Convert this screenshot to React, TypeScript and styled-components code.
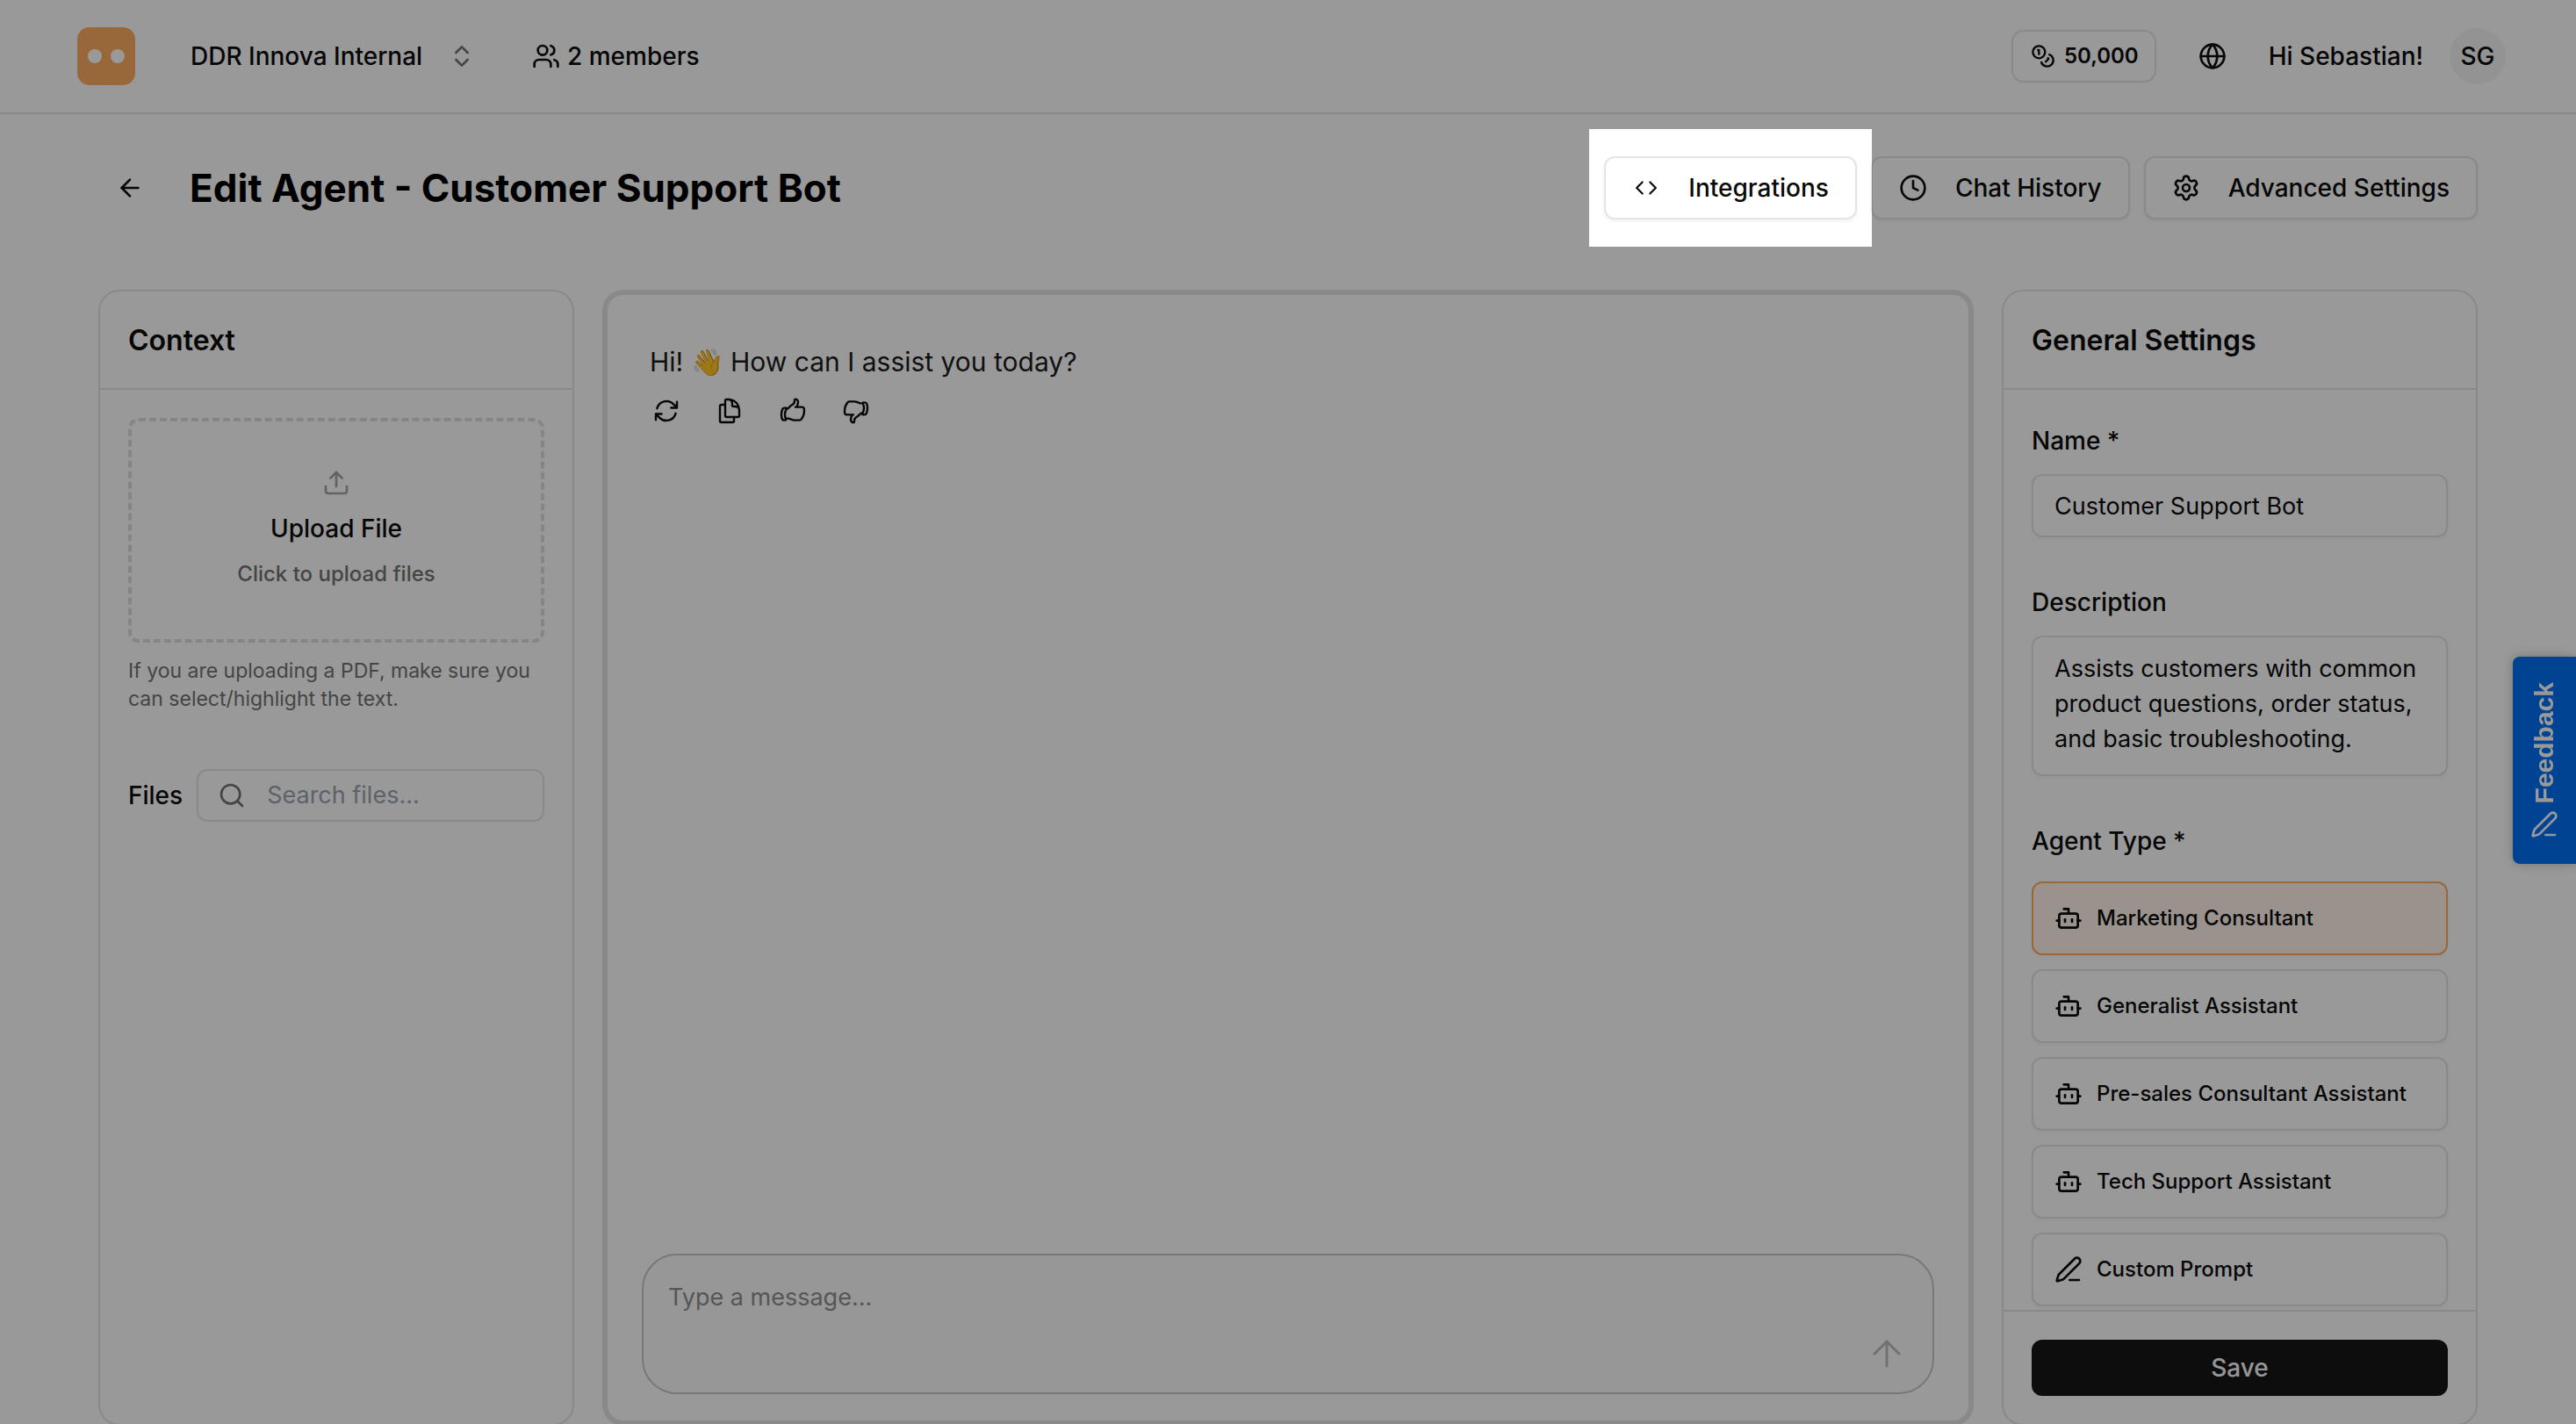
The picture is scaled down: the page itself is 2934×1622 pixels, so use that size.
import React, { useState } from "react";
import styled, { createGlobalStyle } from "styled-components";
import {
  ArrowLeft,
  ArrowUp,
  Bot,
  ChevronsUpDown,
  Clock,
  Code,
  Coins,
  Globe,
  PenLine,
  Search,
  Settings,
  Upload,
  Users,
} from "lucide-react";
import {
  HiOutlineArrowPath,
  HiOutlineDocumentDuplicate,
  HiOutlineHandThumbDown,
  HiOutlineHandThumbUp,
} from "react-icons/hi2";

const color = {
  text: "#0a0a0a",
  muted: "#737373",
  placeholder: "#9ca3af",
  border: "#e5e5e5",
  accent: "#ffad61",
  accentSoft: "#fff3eb",
  primary: "#171717",
  feedback: "#0071f5",
};

const GlobalStyle = createGlobalStyle`
  *, *::before, *::after { box-sizing: border-box; }
  html, body { margin: 0; background: #fff; }
  body, button, input, textarea, select {
    font-family: Inter, "Noto Sans", sans-serif;
    font-size: 28px;
    line-height: 40px;
    color: ${color.text};
  }
  input, textarea { font-size: 27px; }
  h1, h2, p { margin: 0; }
  button { cursor: pointer; }
  svg { flex: none; display: block; }
`;

const Page = styled.div`
  display: flex;
  flex-direction: column;
  height: 100vh;
  overflow: hidden;
`;

const TopBar = styled.header`
  display: flex;
  align-items: center;
  justify-content: space-between;
  height: 130px;
  flex: none;
  padding: 0 80px 0 88px;
  border-bottom: 2px solid ${color.border};
`;

const TopGroup = styled.div`
  display: flex;
  align-items: center;
`;

const Logo = styled.a`
  display: flex;
  margin-right: 63px;
`;

const Workspace = styled.label`
  display: flex;
  align-items: center;
  gap: 28px;
  color: ${color.muted};
  margin-right: 64px;
`;

const WorkspaceSelect = styled.select`
  appearance: none;
  border: 0;
  padding: 0;
  background: none;
  font-weight: 500;
`;

const PlainButton = styled.button`
  display: flex;
  align-items: center;
  gap: 8px;
  border: 0;
  padding: 0;
  background: none;
  font-weight: 500;
`;

const Credits = styled.button`
  display: flex;
  align-items: center;
  gap: 10px;
  height: 60px;
  padding: 0 18px 0 20px;
  border: 2px solid ${color.border};
  border-radius: 14px;
  background: #fff;
  font-size: 24px;
  font-weight: 600;
  margin-right: 48px;
`;

const Greeting = styled.span`
  font-weight: 500;
  margin: 0 30px 0 48px;
`;

const Avatar = styled.button`
  width: 64px;
  height: 64px;
  border: 0;
  border-radius: 50%;
  padding: 0;
  background: #f5f5f5;
  font-weight: 500;
`;

const Main = styled.main`
  display: flex;
  flex-direction: column;
  flex: 1;
  min-height: 0;
  padding: 48px 112px 0;
`;

const TitleRow = styled.div`
  display: flex;
  align-items: center;
  justify-content: space-between;
  height: 72px;
  flex: none;
  margin-bottom: 80px;
`;

const TitleGroup = styled.div`
  display: flex;
  align-items: center;
  gap: 52px;
  padding-left: 20px;
`;

const Title = styled.h1`
  font-size: 44px;
  line-height: 64px;
  font-weight: 700;
  color: #000;
`;

const Actions = styled.div`
  display: flex;
  gap: 16px;
`;

const ActionButton = styled.button`
  display: flex;
  align-items: center;
  gap: 32px;
  height: 72px;
  padding: 0 30px;
  border: 2px solid ${color.border};
  border-radius: 12px;
  background: #fff;
  box-shadow: 0 2px 4px rgba(0, 0, 0, 0.06);
  font-weight: 500;
`;

const IconSlot = styled.span`
  display: grid;
  place-items: center;
  width: 32px;
`;

/* Tour step: dims everything on the page except the wrapped control. */
const Spotlight = styled.div`
  position: relative;
  z-index: 10;

  &::after {
    content: "";
    position: absolute;
    inset: -31px -17px;
    box-shadow: 0 0 0 9999px rgba(0, 0, 0, 0.4);
    pointer-events: none;
  }
`;

const Columns = styled.div`
  display: grid;
  grid-template-columns: 20% minmax(0, 1fr) 20%;
  gap: 32px;
  flex: 1;
  min-height: 0;
  margin-bottom: -2px;
`;

const Card = styled.section<{ $ring?: boolean }>`
  display: flex;
  flex-direction: column;
  min-height: 0;
  overflow: hidden;
  border: ${(p) => (p.$ring ? 6 : 2)}px solid ${color.border};
  border-radius: 24px;
  background: #fff;
`;

const CardHeader = styled.header`
  flex: none;
  padding: 36px 32px 34px;
  border-bottom: 2px solid ${color.border};
`;

const CardTitle = styled.h2`
  font-size: 32px;
  line-height: 40px;
  font-weight: 600;
`;

const ContextBody = styled.div`
  display: flex;
  flex-direction: column;
  padding: 32px;
`;

const DropZone = styled.button`
  display: flex;
  flex-direction: column;
  align-items: center;
  justify-content: center;
  gap: 12px;
  height: 256px;
  border: 4px dashed #dedede;
  border-radius: 12px;
  background: #fff;
  font-weight: 500;

  svg {
    margin-bottom: 4px;
  }
`;

const DropHint = styled.span`
  font-size: 24px;
  color: ${color.muted};
`;

const Note = styled.p`
  margin-top: 16px;
  font-size: 23px;
  line-height: 32px;
  color: ${color.muted};
`;

const FilesRow = styled.div`
  display: flex;
  align-items: center;
  gap: 16px;
  margin-top: 64px;
`;

const FieldLabel = styled.label`
  font-weight: 500;
  line-height: 28px;
`;

const SearchBox = styled.div`
  display: flex;
  align-items: center;
  gap: 24px;
  flex: 1;
  min-width: 0;
  height: 60px;
  padding: 0 22px;
  border: 2px solid ${color.border};
  border-radius: 12px;
  color: ${color.muted};
`;

const SearchInput = styled.input`
  flex: 1;
  min-width: 0;
  border: 0;
  outline: 0;
  padding: 0;
  background: none;

  &::placeholder {
    color: ${color.placeholder};
  }
`;

const ChatBody = styled.div`
  flex: 1;
  padding: 52px 48px;
`;

const Message = styled.p`
  font-size: 30px;
  line-height: 48px;
  color: #1c1c1c;
`;

const MessageActions = styled.div`
  display: flex;
  gap: 40px;
  margin-top: 16px;
  padding-left: 3px;
`;

const IconButton = styled.button`
  display: flex;
  border: 0;
  padding: 0;
  background: none;
  font-size: 32px;
  line-height: 32px;

  svg {
    stroke-width: 1.8;
  }
`;

const Composer = styled.form`
  display: flex;
  height: 160px;
  flex: none;
  margin: 0 39px 30px;
  padding: 28px 28px 20px;
  border: 2px solid #c8c8c8;
  border-radius: 40px;
  background: #fcfcfc;
`;

const ComposerInput = styled.textarea`
  flex: 1;
  border: 0;
  outline: 0;
  padding: 0;
  resize: none;
  background: none;

  &::placeholder {
    color: #8f8f8f;
  }
`;

const SendButton = styled.button`
  align-self: flex-end;
  border: 0;
  padding: 0;
  background: none;
  color: #bdbdbd;
`;

const SettingsBody = styled.div`
  display: flex;
  flex-direction: column;
  gap: 60px;
  flex: 1;
  min-height: 0;
  overflow: hidden;
  padding: 44px 32px 0;
`;

const Field = styled.div`
  display: flex;
  flex-direction: column;
  gap: 24px;
`;

const TextInput = styled.input`
  height: 72px;
  padding: 0 24px;
  border: 2px solid ${color.border};
  border-radius: 12px;
  background: #fff;
  box-shadow: 0 2px 4px rgba(0, 0, 0, 0.04);
`;

const TextArea = styled.textarea`
  height: 160px;
  padding: 16px 24px;
  border: 2px solid ${color.border};
  border-radius: 12px;
  background: #fff;
  box-shadow: 0 2px 4px rgba(0, 0, 0, 0.04);
  resize: none;
  overflow: hidden;
`;

const TypeGroup = styled.fieldset`
  display: flex;
  flex-direction: column;
  gap: 16px;
  min-width: 0;
  margin: 0;
  padding: 0;
  border: 0;
`;

const TypeLegend = styled.legend`
  padding: 0;
  margin-bottom: 32px;
  font-weight: 500;
  line-height: 28px;
`;

const TypeOption = styled.label`
  display: flex;
  align-items: center;
  gap: 16px;
  height: 84px;
  padding: 0 24px;
  border: 2px solid ${color.border};
  border-radius: 12px;
  background: #fff;
  box-shadow: 0 2px 4px rgba(0, 0, 0, 0.04);
  font-size: 24px;
  font-weight: 500;
  white-space: nowrap;
  cursor: pointer;

  &:has(input:checked) {
    border-color: ${color.accent};
    background: ${color.accentSoft};
  }
`;

const HiddenRadio = styled.input`
  position: absolute;
  opacity: 0;
  pointer-events: none;
`;

const CardFooter = styled.footer`
  display: flex;
  flex: none;
  padding: 32px;
  border-top: 2px solid ${color.border};
`;

const SaveButton = styled.button`
  flex: 1;
  height: 64px;
  border: 0;
  border-radius: 12px;
  background: ${color.primary};
  color: #fafafa;
  font-weight: 500;
`;

const FeedbackTab = styled.button`
  position: fixed;
  right: 0;
  top: calc(50% - 63px);
  z-index: 5;
  display: flex;
  flex-direction: column;
  align-items: center;
  justify-content: center;
  gap: 8px;
  width: 72px;
  height: 236px;
  padding: 0;
  border: 0;
  border-radius: 8px 0 0 8px;
  background: ${color.feedback};
  color: #fff;
  box-shadow: 0 0 12px rgba(0, 0, 0, 0.25);
`;

const FeedbackText = styled.span`
  writing-mode: vertical-rl;
  transform: rotate(180deg);
  font-family: "Liberation Sans", Arial, sans-serif;
  font-size: 30px;
  line-height: 40px;
  font-weight: 700;
`;

const agentTypes = [
  { name: "Marketing Consultant", Icon: Bot },
  { name: "Generalist Assistant", Icon: Bot },
  { name: "Pre-sales Consultant Assistant", Icon: Bot },
  { name: "Tech Support Assistant", Icon: Bot },
  { name: "Custom Prompt", Icon: PenLine },
];

const messageActions = [
  { label: "Regenerate", Icon: HiOutlineArrowPath },
  { label: "Copy", Icon: HiOutlineDocumentDuplicate },
  { label: "Good response", Icon: HiOutlineHandThumbUp },
  { label: "Bad response", Icon: HiOutlineHandThumbDown },
];

function Header() {
  return (
    <TopBar>
      <TopGroup>
        <Logo href="#" aria-label="Home">
          <svg width="66" height="66" viewBox="0 0 66 66">
            <rect width="66" height="66" rx="14" fill={color.accent} />
            <circle cx="20" cy="33" r="8" fill="#fff" />
            <circle cx="46" cy="33" r="8" fill="#fff" />
          </svg>
        </Logo>
        <Workspace>
          <WorkspaceSelect aria-label="Workspace">
            <option>DDR Innova Internal</option>
          </WorkspaceSelect>
          <ChevronsUpDown size={32} />
        </Workspace>
        <PlainButton>
          <Users size={32} />2 members
        </PlainButton>
      </TopGroup>
      <TopGroup>
        <Credits>
          <Coins size={28} />
          50,000
        </Credits>
        <PlainButton aria-label="Language">
          <Globe size={32} />
        </PlainButton>
        <Greeting>Hi Sebastian!</Greeting>
        <Avatar>SG</Avatar>
      </TopGroup>
    </TopBar>
  );
}

function ContextPanel() {
  return (
    <Card>
      <CardHeader>
        <CardTitle>Context</CardTitle>
      </CardHeader>
      <ContextBody>
        <DropZone type="button">
          <Upload size={32} color="#a3a3a3" />
          <span>Upload File</span>
          <DropHint>Click to upload files</DropHint>
        </DropZone>
        <Note>
          If you are uploading a PDF, make sure you can select/highlight the
          text.
        </Note>
        <FilesRow>
          <FieldLabel htmlFor="file-search">Files</FieldLabel>
          <SearchBox>
            <Search size={32} />
            <SearchInput id="file-search" placeholder="Search files..." />
          </SearchBox>
        </FilesRow>
      </ContextBody>
    </Card>
  );
}

function ChatPanel() {
  return (
    <Card $ring>
      <ChatBody>
        <Message>Hi! 👋 How can I assist you today?</Message>
        <MessageActions>
          {messageActions.map(({ label, Icon }) => (
            <IconButton key={label} aria-label={label}>
              <Icon />
            </IconButton>
          ))}
        </MessageActions>
      </ChatBody>
      <Composer onSubmit={(e) => e.preventDefault()}>
        <ComposerInput aria-label="Message" placeholder="Type a message..." />
        <SendButton aria-label="Send">
          <ArrowUp size={48} strokeWidth={1.5} />
        </SendButton>
      </Composer>
    </Card>
  );
}

function SettingsPanel() {
  const [selected, setSelected] = useState(agentTypes[0].name);
  return (
    <Card>
      <CardHeader>
        <CardTitle>General Settings</CardTitle>
      </CardHeader>
      <SettingsBody>
        <Field>
          <FieldLabel htmlFor="agent-name">Name *</FieldLabel>
          <TextInput id="agent-name" defaultValue="Customer Support Bot" />
        </Field>
        <Field>
          <FieldLabel htmlFor="agent-description">Description</FieldLabel>
          <TextArea
            id="agent-description"
            defaultValue="Assists customers with common product questions, order status, and basic troubleshooting."
          />
        </Field>
        <TypeGroup>
          <TypeLegend>Agent Type *</TypeLegend>
          {agentTypes.map(({ name, Icon }) => (
            <TypeOption key={name}>
              <HiddenRadio
                type="radio"
                name="agent-type"
                checked={selected === name}
                onChange={() => setSelected(name)}
              />
              <Icon size={32} />
              {name}
            </TypeOption>
          ))}
        </TypeGroup>
      </SettingsBody>
      <CardFooter>
        <SaveButton>Save</SaveButton>
      </CardFooter>
    </Card>
  );
}

export default function App() {
  return (
    <Page>
      <GlobalStyle />
      <Header />
      <Main>
        <TitleRow>
          <TitleGroup>
            <PlainButton aria-label="Back">
              <ArrowLeft size={32} />
            </PlainButton>
            <Title>Edit Agent - Customer Support Bot</Title>
          </TitleGroup>
          <Actions>
            <Spotlight>
              <ActionButton>
                <IconSlot>
                  <Code size={26} />
                </IconSlot>
                Integrations
              </ActionButton>
            </Spotlight>
            <ActionButton>
              <IconSlot>
                <Clock size={32} />
              </IconSlot>
              Chat History
            </ActionButton>
            <ActionButton>
              <IconSlot>
                <Settings size={32} />
              </IconSlot>
              Advanced Settings
            </ActionButton>
          </Actions>
        </TitleRow>
        <Columns>
          <ContextPanel />
          <ChatPanel />
          <SettingsPanel />
        </Columns>
      </Main>
      <FeedbackTab>
        <FeedbackText>Feedback</FeedbackText>
        <PenLine size={32} />
      </FeedbackTab>
    </Page>
  );
}
